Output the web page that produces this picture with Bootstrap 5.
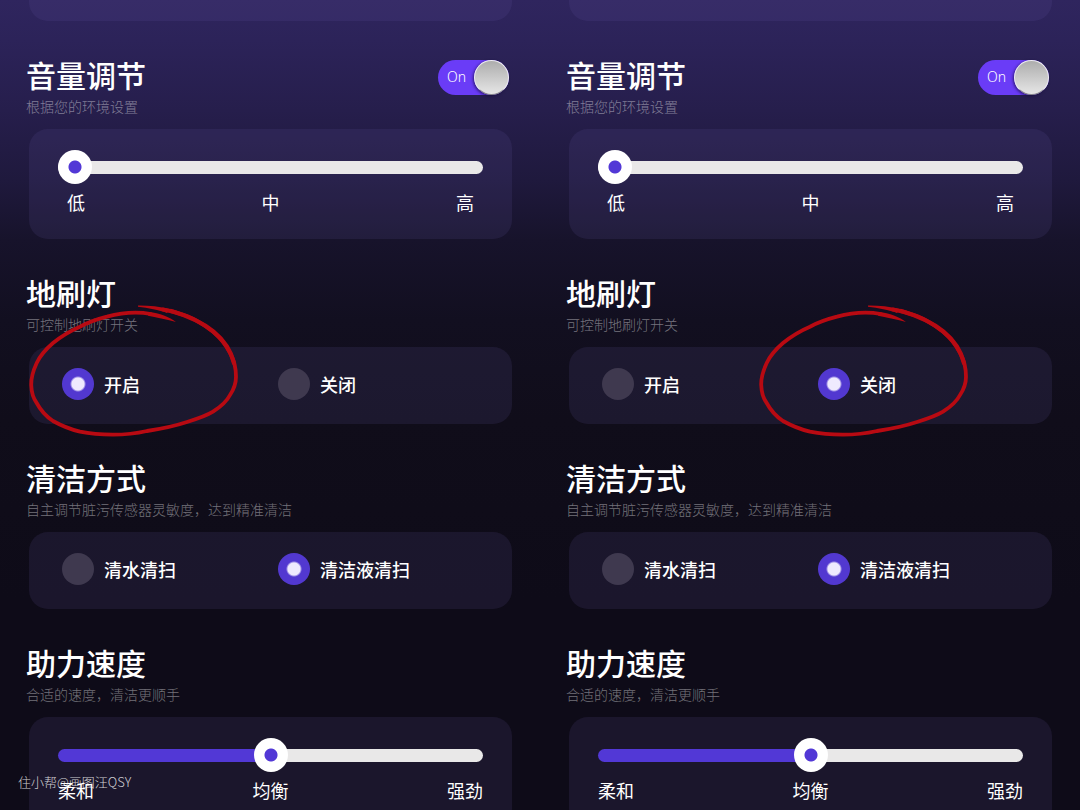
<!DOCTYPE html>
<html lang="zh-CN">
<head>
<meta charset="utf-8">
<meta name="viewport" content="width=device-width, initial-scale=1">
<title>设备设置</title>
<link href="https://cdn.jsdelivr.net/npm/bootstrap@5.3.0/dist/css/bootstrap.min.css" rel="stylesheet">
<style>
  body { font-family: "Noto Sans CJK SC", sans-serif; background: #0e0b18; color: #fff; }
  .stage { height: 100vh; background: linear-gradient(#2f255e 0, #2c2359 40px, #261e4c 110px, #1f193d 180px, #17132b 240px, #120f20 320px, #100d1a 420px, #0e0b18 600px); }
  .screen { padding: 0 28px 0 29px; }
  .panel { background: rgba(104, 92, 170, .14); border-radius: 19px; }
  .panel-end { height: 21px; margin-bottom: 35px; border-radius: 0 0 19px 19px; }
  .setting { margin-bottom: 35px; }
  .setting-head { margin: 0 3px 13px -3px; }
  .setting-title { font-size: 30px; line-height: 36px; font-weight: 500; margin-bottom: 4px; }
  .setting-note { font-size: 14px; line-height: 20px; color: rgba(255, 255, 255, .42); font-weight: 300; }
  .slider-panel { padding: 21px 29px 25px; }
  .level { appearance: none; -webkit-appearance: none; display: block; width: 100%; height: 34px; margin: 0 0 6px; background: transparent; }
  .level::-webkit-slider-runnable-track { height: 13px; border-radius: 7px; background: linear-gradient(90deg, #5238d6 var(--fill), #e9e8e8 var(--fill)); }
  .level::-webkit-slider-thumb { -webkit-appearance: none; width: 34px; height: 34px; margin-top: -11px; border-radius: 50%; background: radial-gradient(circle, #5238d6 6px, #fff 7px); }
  .ticks { font-size: 18px; line-height: 24px; }
  .ticks span { width: 36px; text-align: center; }
  .choice-panel { padding: 21px 18px 24px 33px; }
  .choice { font-size: 18px; line-height: 32px; font-weight: 500; gap: 10px; }
  .dot { appearance: none; -webkit-appearance: none; width: 32px; height: 32px; margin: 0; border-radius: 50%; background: #3f394f; }
  .dot:checked { background: radial-gradient(circle, #efeafe 6px, #5238d0 8px); }
  .power { width: 71px; height: 36px; font-family: "Noto Sans", sans-serif; font-size: 14px; line-height: 34px; font-weight: 300; }
  .power input { appearance: none; -webkit-appearance: none; display: block; width: 71px; height: 35px; margin: 0; border-radius: 18px; background: #6a3cf7; }
  .power input::after { content: ""; display: block; width: 35px; height: 35px; margin-left: auto; border-radius: 50%; border: 1px solid #eee; border-bottom-color: #888; background: linear-gradient(#adadad, #e6e6e6); box-shadow: -1px 1px 3px rgba(20, 10, 60, .7); }
  .power span { left: 9px; top: 0; }
  .ring { top: -42px; width: 210px; height: 134px; pointer-events: none; }
  .ring-first { left: 0; }
  .ring-second { left: 190px; }
  .credit { left: 18px; bottom: 18px; font-size: 13px; line-height: 20px; font-weight: 300; color: rgba(255, 255, 255, .8); }
</style>
</head>
<body>
<svg class="d-none" xmlns="http://www.w3.org/2000/svg">
  <symbol id="brush" viewBox="0 0 210 134">
    <g fill="none" stroke="#b80a12" stroke-width="3.8" stroke-linecap="round" stroke-linejoin="round">
      <path d="M122 9C108 6.500 92 7.800 78 11.700C67 14.500 58 18 51 21.700C41 26 32 31.500 24 38C17 44 11 51 7.700 58C4 66 2 73 2.200 80C2.500 87 4 93 7.700 98C12 106 18 112 24 116C33 121 42 124.500 51 126.700C62 129 73 129.700 84 129.700C96 129.700 107 128.500 118 126C131 124 146 121 158 117C168 114 177 111 184 106.700C192 101.500 198 96 201 90C205 84 207 78 207 71.700C207 63 205 55 201 48C197 40 191 32.500 184 26.700C176 20.500 168 15 158 11C150 8 142 5.800 134 4.500"/>
      <path d="M205 58C199 34 177 16 142 6" stroke-width="4.400"/>
    </g>
    <path fill="#b80a12" d="M120 7C130 8 141 12 147 17C138 14.500 129 13 119 10.800ZM109 .5C120 .4 130 1.500 141 4L138 8C130 5 119 3 109 1.800Z"/>
  </symbol>
</svg>
<div class="stage position-relative overflow-hidden">
  <main class="row g-0">
    <div class="col-6 screen">
      <div class="panel panel-end"></div>
      <section class="setting">
        <div class="setting-head d-flex justify-content-between align-items-start">
          <div><h2 class="setting-title">音量调节</h2><p class="setting-note mb-0">根据您的环境设置</p></div>
          <label class="power position-relative mt-1"><input type="checkbox" role="switch" checked><span class="position-absolute">On</span></label>
        </div>
        <div class="panel slider-panel">
          <input class="level" type="range" min="0" max="2" value="0" aria-label="音量调节" style="--fill:0%">
          <div class="ticks d-flex justify-content-between"><span>低</span><span>中</span><span>高</span></div>
        </div>
      </section>
      <section class="setting">
        <div class="setting-head"><h2 class="setting-title">地刷灯</h2><p class="setting-note mb-0">可控制地刷灯开关</p></div>
        <div class="panel choice-panel position-relative">
          <div class="row g-0">
            <label class="choice col-6 d-flex align-items-center"><input class="dot" type="radio" name="lamp-a" checked>开启</label>
            <label class="choice col-6 d-flex align-items-center"><input class="dot" type="radio" name="lamp-a">关闭</label>
          </div>
          <svg class="ring ring-first position-absolute" aria-hidden="true"><use href="#brush"/></svg>
        </div>
      </section>
      <section class="setting">
        <div class="setting-head"><h2 class="setting-title">清洁方式</h2><p class="setting-note mb-0">自主调节脏污传感器灵敏度，达到精准清洁</p></div>
        <div class="panel choice-panel">
          <div class="row g-0">
            <label class="choice col-6 d-flex align-items-center"><input class="dot" type="radio" name="clean-a">清水清扫</label>
            <label class="choice col-6 d-flex align-items-center"><input class="dot" type="radio" name="clean-a" checked>清洁液清扫</label>
          </div>
        </div>
      </section>
      <section class="setting">
        <div class="setting-head"><h2 class="setting-title">助力速度</h2><p class="setting-note mb-0">合适的速度，清洁更顺手</p></div>
        <div class="panel slider-panel">
          <input class="level" type="range" min="0" max="2" value="1" aria-label="助力速度" style="--fill:50%">
          <div class="ticks d-flex justify-content-between"><span>柔和</span><span>均衡</span><span>强劲</span></div>
        </div>
      </section>
    </div>
    <div class="col-6 screen">
      <div class="panel panel-end"></div>
      <section class="setting">
        <div class="setting-head d-flex justify-content-between align-items-start">
          <div><h2 class="setting-title">音量调节</h2><p class="setting-note mb-0">根据您的环境设置</p></div>
          <label class="power position-relative mt-1"><input type="checkbox" role="switch" checked><span class="position-absolute">On</span></label>
        </div>
        <div class="panel slider-panel">
          <input class="level" type="range" min="0" max="2" value="0" aria-label="音量调节" style="--fill:0%">
          <div class="ticks d-flex justify-content-between"><span>低</span><span>中</span><span>高</span></div>
        </div>
      </section>
      <section class="setting">
        <div class="setting-head"><h2 class="setting-title">地刷灯</h2><p class="setting-note mb-0">可控制地刷灯开关</p></div>
        <div class="panel choice-panel position-relative">
          <div class="row g-0">
            <label class="choice col-6 d-flex align-items-center"><input class="dot" type="radio" name="lamp-b">开启</label>
            <label class="choice col-6 d-flex align-items-center"><input class="dot" type="radio" name="lamp-b" checked>关闭</label>
          </div>
          <svg class="ring ring-second position-absolute" aria-hidden="true"><use href="#brush"/></svg>
        </div>
      </section>
      <section class="setting">
        <div class="setting-head"><h2 class="setting-title">清洁方式</h2><p class="setting-note mb-0">自主调节脏污传感器灵敏度，达到精准清洁</p></div>
        <div class="panel choice-panel">
          <div class="row g-0">
            <label class="choice col-6 d-flex align-items-center"><input class="dot" type="radio" name="clean-b">清水清扫</label>
            <label class="choice col-6 d-flex align-items-center"><input class="dot" type="radio" name="clean-b" checked>清洁液清扫</label>
          </div>
        </div>
      </section>
      <section class="setting">
        <div class="setting-head"><h2 class="setting-title">助力速度</h2><p class="setting-note mb-0">合适的速度，清洁更顺手</p></div>
        <div class="panel slider-panel">
          <input class="level" type="range" min="0" max="2" value="1" aria-label="助力速度" style="--fill:50%">
          <div class="ticks d-flex justify-content-between"><span>柔和</span><span>均衡</span><span>强劲</span></div>
        </div>
      </section>
    </div>
  </main>
  <div class="credit position-absolute">住小帮@画图汪QSY</div>
</div>
<script src="https://cdn.jsdelivr.net/npm/bootstrap@5.3.0/dist/js/bootstrap.bundle.min.js"></script>
</body>
</html>
